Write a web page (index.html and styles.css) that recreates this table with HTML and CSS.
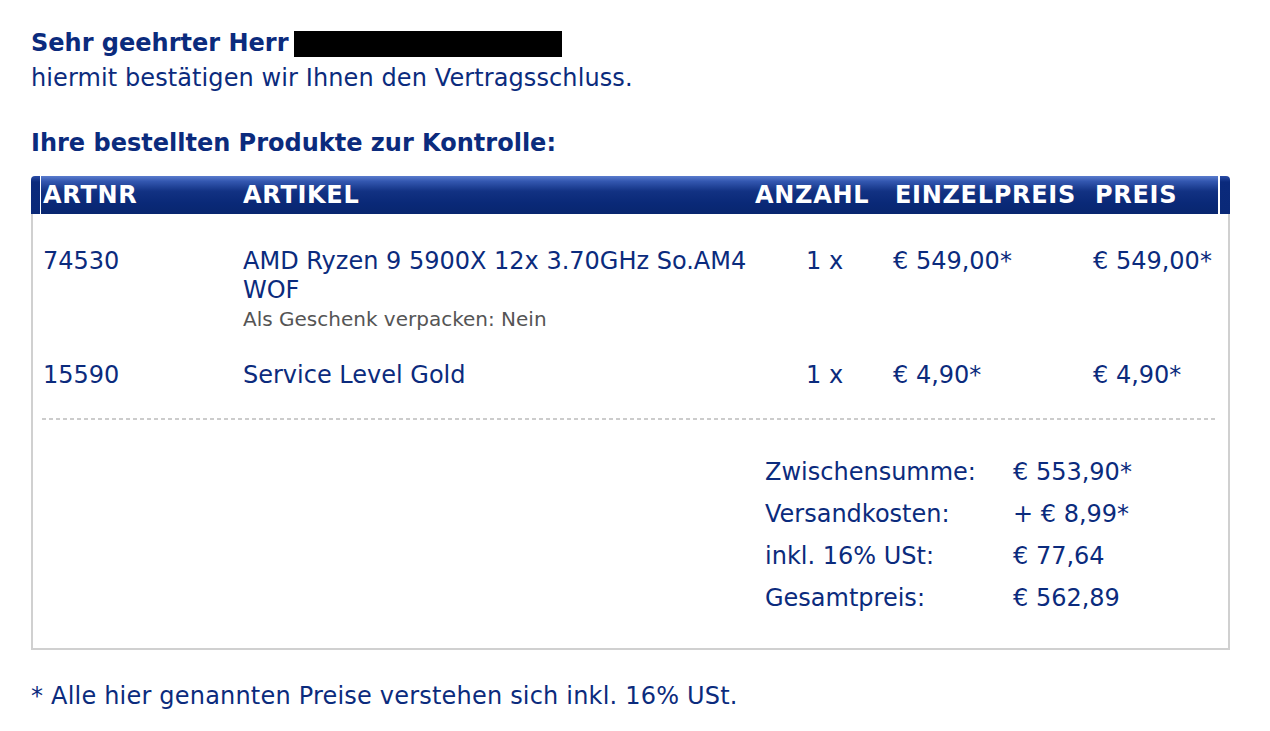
FILE: index.html
```html
<!DOCTYPE html>
<html lang="de">
<head>
<meta charset="utf-8">
<title>Bestellbestätigung</title>
<link rel="stylesheet" href="styles.css">
</head>
<body>
<div class="page">
  <p class="greet"><strong>Sehr geehrter Herr</strong><span class="redact"></span></p>
  <p class="intro">hiermit bestätigen wir Ihnen den Vertragsschluss.</p>
  <h2 class="section">Ihre bestellten Produkte zur Kontrolle:</h2>

  <div class="order">
    <div class="thead">
      <span class="cap cap-l"></span>
      <div class="bar">
        <span>ARTNR</span>
        <span>ARTIKEL</span>
        <span>ANZAHL</span>
        <span>EINZELPREIS</span>
        <span>PREIS</span>
      </div>
      <span class="cap cap-r"></span>
    </div>
    <div class="obody">
      <div class="row">
        <span>74530</span>
        <div class="art">
          <div>AMD Ryzen 9 5900X 12x 3.70GHz So.AM4 WOF</div>
          <div class="gift">Als Geschenk verpacken: Nein</div>
        </div>
        <span class="qty">1 x</span>
        <span>€ 549,00*</span>
        <span>€ 549,00*</span>
      </div>
      <div class="row row2">
        <span>15590</span>
        <div class="art">Service Level Gold</div>
        <span class="qty">1 x</span>
        <span>€ 4,90*</span>
        <span>€ 4,90*</span>
      </div>
      <div class="dash"></div>
      <div class="totals">
        <span>Zwischensumme:</span><span>€ 553,90*</span>
        <span>Versandkosten:</span><span>+ € 8,99*</span>
        <span>inkl. 16% USt:</span><span>€ 77,64</span>
        <span>Gesamtpreis:</span><span>€ 562,89</span>
      </div>
    </div>
  </div>

  <p class="note">* Alle hier genannten Preise verstehen sich inkl. 16% USt.</p>
</div>
</body>
</html>
```

FILE: styles.css
```css
html, body {
  margin: 0;
  padding: 0;
  background: #ffffff;
}

body {
  font-family: "DejaVu Sans", Verdana, sans-serif;
  font-size: 24px;
  line-height: 29px;
  color: #0b2b7d;
}

.page {
  padding: 29px 0 0 31px;
  width: 1199px;
}

p, h2 {
  margin: 0;
}

.greet {
  display: flex;
  align-items: center;
  height: 29px;
}

.greet strong {
  font-weight: bold;
}

.redact {
  display: inline-block;
  width: 268px;
  height: 26px;
  margin-left: 6px;
  background: #000000;
}

.intro {
  margin-top: 6px;
  letter-spacing: 0.1px;
}

.section {
  font-size: 24px;
  font-weight: bold;
  margin-top: 36px;
}

.order {
  margin-top: 18px;
}

.thead {
  display: flex;
  height: 38px;
}

.cap {
  display: block;
  background: linear-gradient(#2a4ca6 0, #0b2a7c 6px, #0a2978 100%);
}

.cap-l {
  width: 9px;
  margin-right: 1px;
  border-top-left-radius: 4px;
}

.cap-r {
  width: 10px;
  margin-left: 2px;
  border-top-right-radius: 4px;
}

.bar {
  flex: 1;
  display: grid;
  grid-template-columns: 200px 512px 140px 200px 1fr;
  align-items: center;
  padding-left: 2px;
  color: #ffffff;
  font-weight: bold;
  letter-spacing: 0.7px;
  background: linear-gradient(#5a7ccd 0%, #3357b0 14%, #123283 40%, #0a2978 70%, #08266f 100%);
}

.obody {
  border: 2px solid #d0d0d0;
  border-top: none;
  padding: 33px 0 29px 0;
}

.row {
  display: grid;
  grid-template-columns: 200px 512px 138px 200px 1fr;
  padding-left: 10px;
}

.row2 {
  margin-top: 27px;
}

.qty {
  padding-left: 51px;
}

.gift {
  font-size: 20px;
  color: #555555;
}

.dash {
  height: 2px;
  margin: 28px 10px 31px 9px;
  background: repeating-linear-gradient(to right, #cccccc 0 4px, transparent 4px 7px);
}

.totals {
  display: grid;
  grid-template-columns: 248px auto;
  grid-auto-rows: 42px;
  align-items: center;
  margin-left: 732px;
}

.note {
  margin-top: 32px;
  letter-spacing: 0.2px;
}
```
